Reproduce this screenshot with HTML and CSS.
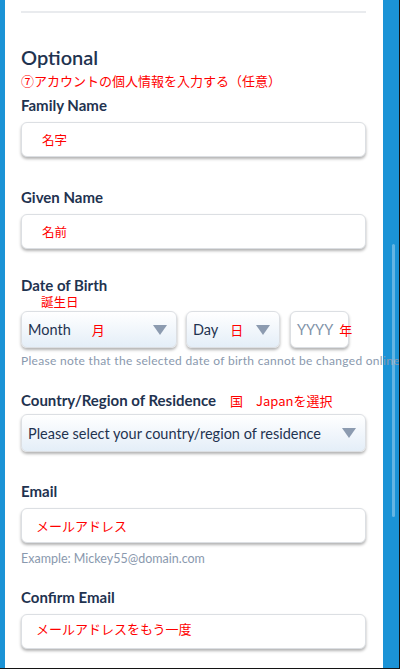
FILE: index.html
```html
<!DOCTYPE html>
<html lang="ja">
<head>
<meta charset="utf-8">
<title>Optional</title>
<link rel="stylesheet" href="styles.css">
</head>
<body>
<div class="frame">
  <main class="panel">
    <hr class="divider">
    <h2 class="section-title">Optional</h2>
    <p class="jp intro">⑦アカウントの個人情報を入力する（任意）</p>

    <div class="field field-family">
      <div class="label">Family Name</div>
      <div class="input"><span class="jp ink-name">名字</span></div>
    </div>

    <div class="field field-given">
      <div class="label">Given Name</div>
      <div class="input"><span class="jp ink-name">名前</span></div>
    </div>

    <div class="field field-dob">
      <div class="label label-dob">Date of Birth</div>
      <div class="jp dob-note">誕生日</div>
      <div class="date-row">
        <div class="box select month">
          <span class="sel-text">Month</span>
          <span class="jp ink-month">月</span>
          <span class="arrow"></span>
        </div>
        <div class="box select day">
          <span class="sel-text">Day</span>
          <span class="jp ink-day">日</span>
          <span class="arrow"></span>
        </div>
        <div class="box year">
          <span class="sel-text placeholder">YYYY</span>
          <span class="jp ink-year">年</span>
        </div>
      </div>
      <div class="hint hint-dob">Please note that the selected date of birth cannot be changed online</div>
    </div>

    <div class="field field-country">
      <div class="label label-row">Country/Region of Residence <span class="jp ink-country">国　Japanを選択</span></div>
      <div class="box select country">
        <span class="sel-text">Please select your country/region of residence</span>
        <span class="arrow"></span>
      </div>
    </div>

    <div class="field field-email">
      <div class="label">Email</div>
      <div class="input"><span class="jp ink-mail">メールアドレス</span></div>
      <div class="hint hint-email">Example: Mickey55@domain.com</div>
    </div>

    <div class="field field-confirm">
      <div class="label">Confirm Email</div>
      <div class="input"><span class="jp ink-mail ink-confirm">メールアドレスをもう一度</span></div>
    </div>
  </main>
  <div class="scroll-thumb"></div>
</div>
</body>
</html>
```

FILE: styles.css
```css
* { box-sizing: border-box; }

html, body {
  margin: 0;
  padding: 0;
  background: #141414;
}

body {
  width: 400px;
  height: 669px;
  overflow: hidden;
  font-family: Lato, "Noto Sans", sans-serif;
  color: #1f3350;
}

.frame {
  position: relative;
  width: 399px;
  height: 668px;
  background: #1b93d6;
  overflow: hidden;
}

.panel {
  margin-left: 5px;
  width: 378px;
  height: 668px;
  background: #fff;
  padding: 11px 17px 0 16px;
}

.divider {
  margin: 0;
  border: 0;
  height: 2px;
  background: #e9ebee;
}

.section-title {
  margin: 32px 0 0;
  font-size: 20px;
  line-height: 24px;
  font-weight: 600;
  color: #1f3350;
}

.jp {
  font-family: "Noto Sans CJK JP", sans-serif;
  color: #ff0000;
  font-size: 12.5px;
  font-weight: 400;
}

.intro {
  margin: 4px 0 0;
  font-size: 13px;
  line-height: 16px;
  white-space: nowrap;
}

.label {
  font-size: 15px;
  line-height: 18px;
  font-weight: 700;
  color: #1f3350;
  white-space: nowrap;
}

.label-dob { line-height: 17px; }

.field-family { margin-top: 7px; }
.field-given { margin-top: 31px; }
.field-dob { margin-top: 28px; }
.field-country { margin-top: 23px; }
.field-email { margin-top: 30px; }
.field-confirm { margin-top: 21px; }

.input {
  margin-top: 8px;
  height: 35px;
  border: 1px solid #dcdfe3;
  border-radius: 6px;
  background: #fff;
  box-shadow: 0 2px 3px rgba(0, 0, 0, 0.3);
  display: flex;
  align-items: center;
}

.ink-name { margin-left: 20px; }
.ink-mail { margin-left: 14px; font-size: 13px; }
.ink-confirm { position: relative; top: -3px; }

.dob-note {
  margin: 1px 0 0 20px;
  line-height: 13px;
}

.date-row {
  margin-top: 3px;
  display: flex;
  gap: 9px;
}

.box {
  height: 37px;
  border: 1px solid #dcdfe3;
  border-radius: 6px;
  background: #fff;
  box-shadow: 0 2px 3px rgba(0, 0, 0, 0.3);
  display: flex;
  align-items: center;
  padding-left: 6px;
}

.select {
  background: linear-gradient(#ffffff, #e4eef8);
}

.month { width: 156px; }
.day { width: 94px; }
.year { width: 59px; margin-left: 1px; }

.sel-text {
  font-size: 14.5px;
  color: #1f3350;
  white-space: nowrap;
}

.placeholder { color: #8193a8; }

.ink-month { margin-left: 21px; font-size: 13px; }
.ink-day { margin-left: 12px; font-size: 13px; }
.ink-year { margin-left: 6px; font-size: 13px; }

.arrow {
  margin-left: auto;
  margin-right: 9px;
  width: 0;
  height: 0;
  border-left: 7.5px solid transparent;
  border-right: 7.5px solid transparent;
  border-top: 10px solid #8c9bb0;
}

.hint {
  color: #8a99ae;
  white-space: nowrap;
}

.hint-dob {
  margin-top: 6px;
  font-size: 12px;
  letter-spacing: 0.3px;
  line-height: 14px;
}

.hint-email {
  margin-top: 8px;
  font-size: 12.5px;
  line-height: 16px;
}

.label-row { display: flex; align-items: baseline; }
.ink-country { margin-left: 14px; font-size: 13px; }

.country {
  margin-top: 4px;
  height: 38px;
}

.scroll-thumb {
  position: absolute;
  left: 392px;
  top: 244px;
  width: 3px;
  height: 273px;
  border-radius: 2px;
  background: rgba(255, 255, 255, 0.32);
}
```
